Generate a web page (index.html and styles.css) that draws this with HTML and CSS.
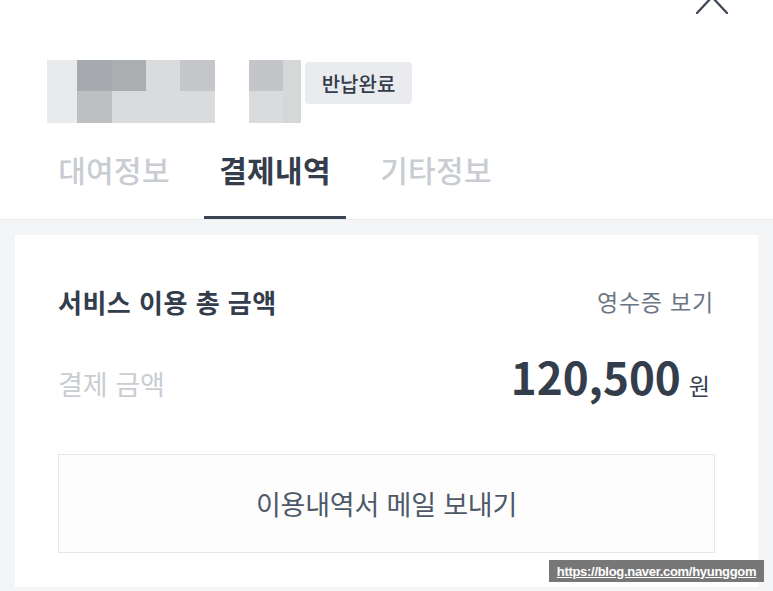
FILE: index.html
```html
<!DOCTYPE html>
<html lang="ko">
<head>
<meta charset="utf-8">
<title>결제내역</title>
<link rel="stylesheet" href="styles.css">
</head>
<body>
<div class="page">
  <header class="header">
    <div class="topbar">
      <svg class="chevron" width="34" height="16" viewBox="0 0 34 16" aria-hidden="true">
        <path d="M2 15 L17 -1 L32 15" fill="none" stroke="#3a4452" stroke-width="2.2" stroke-linecap="round" stroke-linejoin="round"/>
      </svg>
    </div>
    <div class="title-row">
      <div class="mosaic">
        <span class="c w30 g1"></span><span class="c w35 g2"></span><span class="c w34 g3"></span><span class="c w34 g4"></span><span class="c w35 g5"></span><span class="c w34 g0"></span><span class="c w34 g6"></span><span class="c w18 g7"></span>
        <span class="c w30 g1"></span><span class="c w35 g8"></span><span class="c w34 g4"></span><span class="c w34 g4"></span><span class="c w35 g4"></span><span class="c w34 g0"></span><span class="c w34 g4"></span><span class="c w18 g7"></span>
      </div>
      <span class="badge">반납완료</span>
    </div>
    <nav class="tabs">
      <a class="tab">대여정보</a>
      <a class="tab active">결제내역</a>
      <a class="tab">기타정보</a>
    </nav>
  </header>
  <main class="content">
    <section class="card">
      <div class="row head">
        <h2 class="card-title">서비스 이용 총 금액</h2>
        <a class="receipt">영수증 보기</a>
      </div>
      <div class="row amount-row">
        <span class="label">결제 금액</span>
        <span class="amount"><strong>120,500</strong><span class="won">원</span></span>
      </div>
      <button class="mail-btn">이용내역서 메일 보내기</button>
    </section>
  </main>
  <div class="watermark">https://blog.naver.com/hyunggom</div>
</div>
</body>
</html>
```
FILE: styles.css
```css
* { box-sizing: border-box; }
html, body { margin: 0; padding: 0; }
body {
  font-family: "Noto Sans CJK KR", "Noto Sans", sans-serif;
  background: #f4f5f7;
  color: #333d4b;
  width: 773px;
  height: 591px;
  overflow: hidden;
}
.page { position: relative; height: 591px; }

.header {
  background: #fff;
  border-bottom: 1px solid #e8eaed;
  height: 220px;
}
.topbar {
  height: 16px;
  display: flex;
  justify-content: flex-end;
  padding-right: 44px;
}
.chevron { display: block; margin-top: -2px; }

.title-row {
  display: flex;
  align-items: flex-start;
  padding-left: 47px;
  margin-top: 44px;
  height: 63px;
}
.mosaic {
  display: grid;
  grid-template-columns: 30px 35px 34px 34px 35px 34px 34px 18px;
  grid-template-rows: 31px 32px;
}
.c { display: block; }
.g0 { background: #ffffff; }
.g1 { background: #e9eaec; }
.g2 { background: #a6a9ad; }
.g3 { background: #abaeb1; }
.g4 { background: #d9dbdd; }
.g5 { background: #c4c6c9; }
.g6 { background: #c3c5c8; }
.g7 { background: #d5d7d9; }
.g8 { background: #bdc0c3; }

.badge {
  margin-left: 4px;
  margin-top: 2px;
  height: 42px;
  width: 107px;
  display: flex;
  align-items: center;
  justify-content: center;
  background: #e9ebee;
  border-radius: 4px;
  font-size: 20px;
  font-weight: 500;
  color: #333d4b;
}

.tabs {
  display: flex;
  gap: 19px;
  padding-left: 43px;
  margin-top: 17px;
}
.tab {
  height: 79px;
  padding: 0 15px 18px;
  display: flex;
  align-items: center;
  justify-content: center;
  width: 142px;
  font-size: 30px;
  font-weight: 500;
  color: #c9cdd2;
  letter-spacing: 0.3px;
  border-bottom: 3px solid transparent;
  white-space: nowrap;
}
.tab.active {
  color: #333d4b;
  font-weight: 700;
  border-bottom-color: #3a4452;
}

.content { padding: 15px 15px 4px; }
.card {
  background: #fff;
  padding: 50px 43px 34px;
  display: flex;
  flex-direction: column;
}
.row {
  display: flex;
  justify-content: space-between;
}
.head { align-items: center; height: 32px; }
.card-title {
  margin: 0;
  font-size: 26px;
  font-weight: 700;
  letter-spacing: 0.5px;
  color: #333d4b;
}
.receipt {
  font-size: 23px;
  letter-spacing: 0.8px;
  color: #6b7684;
  margin-right: 1px;
}
.amount-row {
  align-items: baseline;
  margin-top: 27px;
  height: 52px;
}
.label {
  font-size: 27px;
  color: #c9cdd2;
}
.amount strong {
  font-size: 44px;
  font-weight: 700;
  color: #333d4b;
  letter-spacing: 0;
}
.won {
  font-size: 23px;
  margin-left: 8px;
  color: #333d4b;
  margin-right: 5px;
}
.mail-btn {
  margin-top: 58px;
  height: 99px;
  width: 100%;
  background: #fdfdfd;
  border: 1px solid #e5e8eb;
  border-radius: 0;
  font-family: inherit;
  font-size: 27px;
  color: #4e5968;
  letter-spacing: -0.2px;
}

.watermark {
  position: absolute;
  left: 549px;
  top: 560px;
  width: 215px;
  height: 22px;
  background: #777;
  color: #fff;
  font-family: "Liberation Sans", Arial, sans-serif;
  font-size: 13px;
  font-weight: 700;
  text-decoration: underline;
  display: flex;
  align-items: center;
  justify-content: center;
  letter-spacing: -0.3px;
}
```
